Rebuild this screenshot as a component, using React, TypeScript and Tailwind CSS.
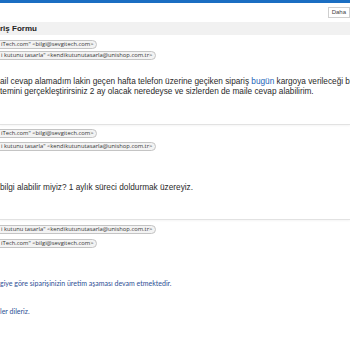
function Pill({ children }: { children: string }) {
  return (
    <div className="flex">
      <span className="-ml-[8px] inline-flex h-[9px] items-center rounded-full border border-[#c4c4c4] bg-[#f3f3f3] pl-[8px] pr-[3px] font-['Open_Sans',sans-serif] text-[5.8px] leading-none text-[#333]">
        {children}
      </span>
    </div>
  );
}

function Separator() {
  return <div className="h-[1px] bg-[#e2e2e2] shadow-[0_1px_2px_rgba(0,0,0,0.06)]" />;
}

export default function App() {
  return (
    <div className="h-[350px] w-[350px] overflow-hidden bg-white font-['Liberation_Sans',Arial,sans-serif] text-[#222]">
      <div className="h-[3px] bg-[#1b6ec2]" />
      <div className="flex h-[19px] items-center justify-end bg-white">
        <div className="flex h-[11px] items-center border border-[#cfcfcf] bg-white px-[3px] text-[6px] text-[#444]">
          Daha
        </div>
      </div>
      <div className="flex h-[13px] items-center bg-[#f1f1f1] text-[8px] font-bold text-[#222]">
        riş Formu
      </div>

      <div className="flex flex-col gap-[2px] pt-[5px]">
        <Pill>iTech.com&quot; &lt;bilgi@sevgitech.com&gt;</Pill>
        <Pill>i kutunu tasarla&quot; &lt;kendikutunutasarla@unishop.com.tr&gt;</Pill>
      </div>
      <div className="whitespace-nowrap pt-[17px] text-[8.25px] leading-[10px] text-[#2a2a2a]">
        <div>
          ail cevap alamadım lakin geçen hafta telefon üzerine geçiken sipariş{' '}
          <span className="text-[#1a63b8]">bugün</span> kargoya verileceği bilgi
        </div>
        <div>temini gerçekleştirirsiniz 2 ay olacak neredeyse ve sizlerden de maile cevap alabilirim.</div>
      </div>

      <div className="pt-[27px]">
        <Separator />
      </div>
      <div className="flex flex-col gap-[4px] pt-[4px]">
        <Pill>iTech.com&quot; &lt;bilgi@sevgitech.com&gt;</Pill>
        <Pill>i kutunu tasarla&quot; &lt;kendikutunutasarla@unishop.com.tr&gt;</Pill>
      </div>
      <div className="whitespace-nowrap pt-[32px] text-[8.25px] leading-[10px] text-[#2a2a2a]">
        bilgi alabilir miyiz? 1 aylık süreci doldurmak üzereyiz.
      </div>

      <div className="pt-[26px]">
        <Separator />
      </div>
      <div className="flex flex-col gap-[5px] pt-[5px]">
        <Pill>i kutunu tasarla&quot; &lt;kendikutunutasarla@unishop.com.tr&gt;</Pill>
        <Pill>iTech.com&quot; &lt;bilgi@sevgitech.com&gt;</Pill>
      </div>
      <div className="whitespace-nowrap pt-[31px] font-['Lato',sans-serif] text-[7px] leading-[8px] text-[#2d4f95]">
        giye göre siparişinizin üretim aşaması devam etmektedir.
      </div>
      <div className="whitespace-nowrap pt-[20px] font-['Lato',sans-serif] text-[7px] leading-[8px] text-[#2d4f95]">
        ler dileriz.
      </div>
    </div>
  );
}
